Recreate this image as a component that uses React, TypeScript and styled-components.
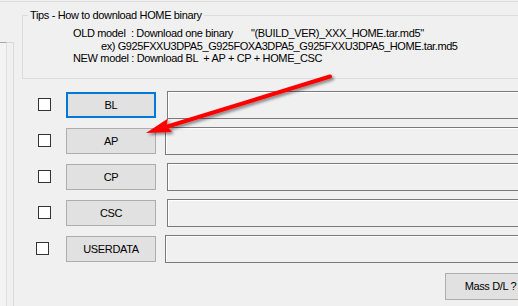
import styled, { createGlobalStyle } from "styled-components"

const GlobalStyle = createGlobalStyle`
    html, body {
        margin: 0;
        padding: 0;
        background: #f0f0f0;
    }
    body {
        width: 518px;
        height: 306px;
        overflow: hidden;
        font-family: "Liberation Sans", Arial, sans-serif;
        font-size: 11px;
        letter-spacing: -0.35px;
        color: #000;
    }
`

const Page = styled.div`
    position: relative;
    width: 540px;
    height: 306px;
    display: flex;
    flex-direction: column;
`

const TopRule = styled.div`
    margin-top: 1px;
    border-top: 1px solid #dcdcdc;
`

const Body = styled.div`
    flex: 1;
    display: flex;
    flex-direction: row;
`

const LeftRail = styled.div`
    width: 13px;
    margin-top: 40px;
    border-top: 1px solid #d6d6d6;
    border-right: 1px solid #dadada;
    display: flex;
`

const RailInner = styled.div`
    width: 6px;
    border-top: 1px solid #a8a8a8;
    margin-top: -1px;
    border-right: 1px solid #e0e0e0;
    background: #f3f3f3;
`

const Main = styled.div`
    flex: 1;
    padding-left: 8px;
    display: flex;
    flex-direction: column;
`

const TipsBox = styled.fieldset`
    margin: 6px 0 0 0;
    padding: 5px 0 13px 5px;
    border: 1px solid #dcdcdc;
    border-right: none;
    min-width: 0;
`

const Legend = styled.legend`
    padding: 0 2px;
    line-height: 14px;
`

const TipLine = styled.div<{ indent: number; tight?: boolean }>`
    padding-left: ${({ indent }) => indent}px;
    line-height: 12.5px;
    white-space: pre;
    letter-spacing: ${({ tight }) => (tight ? `-0.42px` : `-0.35px`)};
`

const TipLabel = styled.span`
    display: inline-block;
    width: 178px;
    white-space: pre;
`

const Rows = styled.div`
    margin-top: 12px;
    display: flex;
    flex-direction: column;
    gap: 8px;
`

const Row = styled.div`
    display: flex;
    align-items: center;
    height: 28px;
`

const CheckBox = styled.div<{ shift?: number }>`
    width: 11px;
    height: 11px;
    border: 1px solid #333;
    background: #fff;
    margin-left: ${({ shift }) => 16 + (shift || 0)}px;
    margin-right: ${({ shift }) => 15 - (shift || 0)}px;
`

const PartButton = styled.div<{ focused?: boolean }>`
    box-sizing: border-box;
    width: 90px;
    height: 26px;
    display: flex;
    align-items: center;
    justify-content: center;
    background: #e1e1e1;
    border: ${({ focused }) => (focused ? `2px solid #0078d7` : `1px solid #adadad`)};
`

const FileField = styled.div<{ shift?: number }>`
    box-sizing: border-box;
    flex: 1;
    height: 28px;
    margin-left: ${({ shift }) => 11 + (shift || 0)}px;
    border: 1px solid #7a7a7a;
    box-shadow: inset 1px 1px 0 #ffffff;
    background: #f0f0f0;
`

const Footer = styled.div`
    margin-top: 10px;
    padding-left: 423px;
    display: flex;
`

const MassButton = styled.div`
    box-sizing: border-box;
    width: 91px;
    height: 27px;
    display: flex;
    align-items: center;
    justify-content: center;
    background: #e1e1e1;
    border: 1px solid #adadad;
`

const ArrowLayer = styled.svg`
    position: absolute;
    left: 0;
    top: 0;
    pointer-events: none;
`

const parts = [
    { name: 'BL', focused: true },
    { name: 'AP', field: -2 },
    { name: 'CP' },
    { name: 'CSC' },
    { name: 'USERDATA', check: -2, field: -2 },
]

export default function App() {
    const rows = parts.map((p) => {
        return (
            <Row key={p.name}>
                <CheckBox shift={p.check} />
                <PartButton focused={p.focused}>{p.name}</PartButton>
                <FileField shift={p.field} />
            </Row>
        )
    })

    return (
        <Page>
            <GlobalStyle />
            <TopRule />
            <Body>
                <LeftRail>
                    <RailInner />
                </LeftRail>
                <Main>
                    <TipsBox>
                        <Legend>Tips - How to download HOME binary</Legend>
                        <TipLine indent={45}>
                            <TipLabel>{'OLD model  : Download one binary'}</TipLabel>
                            "(BUILD_VER)_XXX_HOME.tar.md5"
                        </TipLine>
                        <TipLine indent={73} tight>ex) G925FXXU3DPA5_G925FOXA3DPA5_G925FXXU3DPA5_HOME.tar.md5</TipLine>
                        <TipLine indent={45}>{'NEW model : Download BL  + AP + CP + HOME_CSC'}</TipLine>
                    </TipsBox>
                    <Rows>{rows}</Rows>
                    <Footer>
                        <MassButton>Mass D/L ?</MassButton>
                    </Footer>
                </Main>
            </Body>
            <ArrowLayer width="518" height="306" viewBox="0 0 518 306">
                <defs>
                    <filter id="shadow" x="-20%" y="-20%" width="140%" height="160%">
                        <feDropShadow dx="2" dy="2" stdDeviation="1.5" floodColor="#000" floodOpacity="0.45" />
                    </filter>
                </defs>
                <g filter="url(#shadow)">
                    <line x1="330" y1="76.5" x2="166" y2="127" stroke="#ff0000" strokeWidth="4" strokeLinecap="round" />
                    <polygon points="146,133 168,118.5 166.5,125.5 172,132" fill="#ff0000" />
                </g>
            </ArrowLayer>
        </Page>
    )
}
